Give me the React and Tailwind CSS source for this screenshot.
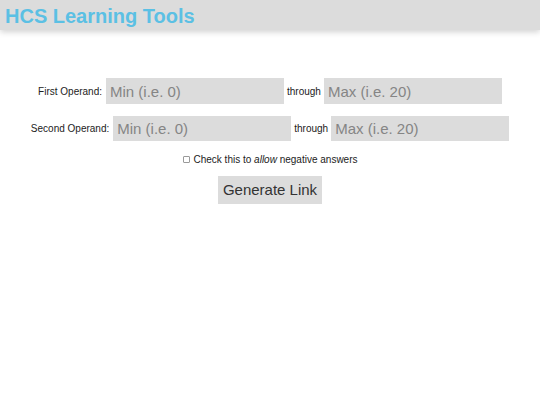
export default function App() {
    const font = { fontFamily: '"Liberation Sans", Arial, sans-serif' };
    return (
        <div className="min-h-screen bg-white" style={font}>
            <div className="h-[30px] bg-[#dcdcdc] shadow-[0_2px_6px_rgba(0,0,0,0.18)] pl-[5px] pt-[2px]">
                <h1 className="text-[20px] leading-[28px] font-bold text-[#5bc0e4]">HCS Learning Tools</h1>
            </div>

            <form className="flex flex-col items-center">
                <div className="mt-[48px] h-[26px] flex items-center gap-[3px] text-[10px] text-[#222]">
                    <span className="mr-[1px]">First Operand:</span>
                    <input
                        placeholder="Min (i.e. 0)"
                        className="w-[178px] h-full bg-[#dcdcdc] px-[4px] text-[15px] placeholder:text-[#858585] outline-none"
                    />
                    <span>through</span>
                    <input
                        placeholder="Max (i.e. 20)"
                        className="w-[178px] h-full bg-[#dcdcdc] px-[4px] text-[15px] placeholder:text-[#858585] outline-none"
                    />
                </div>

                <div className="mt-[12px] h-[25px] flex items-center gap-[3px] text-[10px] text-[#222]">
                    <span className="mr-[1px]">Second Operand:</span>
                    <input
                        placeholder="Min (i.e. 0)"
                        className="w-[178px] h-full bg-[#dcdcdc] px-[4px] text-[15px] placeholder:text-[#858585] outline-none"
                    />
                    <span>through</span>
                    <input
                        placeholder="Max (i.e. 20)"
                        className="w-[178px] h-full bg-[#dcdcdc] px-[4px] text-[15px] placeholder:text-[#858585] outline-none"
                    />
                </div>

                <div className="mt-[10px] h-[16px] flex items-center gap-[4px] text-[10px] text-[#222]">
                    <span className="w-[7px] h-[7px] border border-[#9a9a9a] rounded-[1px] bg-white"></span>
                    <span>
                        Check this to <i>allow</i> negative answers
                    </span>
                </div>

                <button
                    type="button"
                    className="mt-[9px] h-[28px] px-[5px] bg-[#dcdcdc] text-[15px] text-[#333]"
                >
                    Generate Link
                </button>
            </form>
        </div>
    );
}
